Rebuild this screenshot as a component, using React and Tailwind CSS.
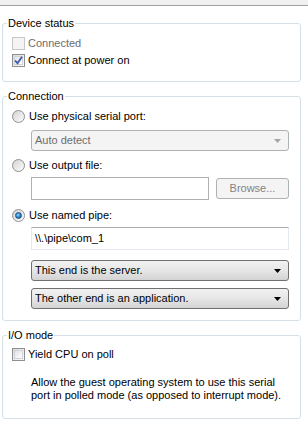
import React from 'react'

const font = "font-['Liberation_Sans',Arial,sans-serif]"

function Group({ title, className, children }) {
  return (
    <fieldset className={'ml-[2px] mr-[7px] p-0 border border-[#d5dfe5] rounded-[3px] ' + className}>
      <legend className="ml-[4px] px-[1px] h-[13px] leading-[13px]">{title}</legend>
      {children}
    </fieldset>
  )
}

function Check({ checked, disabled, label }) {
  return (
    <div className="h-[17px] flex items-center">
      <div
        className={
          'w-[13px] h-[13px] border flex items-center justify-center ' +
          (disabled
            ? 'border-[#c7c7c7] bg-[#f4f4f4]'
            : 'border-[#8f8f8f] bg-gradient-to-br from-[#dcdcdc] to-[#fbfbfb]')
        }
      >
        {!disabled && (
          <div className="w-[9px] h-[9px] border border-[#cfd2d8] bg-gradient-to-br from-[#e3e3e3] to-[#fefefe] flex items-center justify-center">
            {checked && (
              <svg width="9" height="9" viewBox="0 0 9 9" className="overflow-visible">
                <path d="M1 4.5 L3.5 7.2 L8 0.8" fill="none" stroke="#3d58a8" strokeWidth="1.8" />
              </svg>
            )}
          </div>
        )}
      </div>
      <span className={'ml-[3px] ' + (disabled ? 'text-[#6d6d6d]' : '')}>{label}</span>
    </div>
  )
}

function Radio({ checked, label }) {
  return (
    <div className="h-[17px] flex items-center">
      <div className="w-[13px] h-[13px] rounded-full border border-[#8f8f8f] bg-gradient-to-br from-[#d4d4d4] to-[#fcfcfc] flex items-center justify-center">
        {checked && (
          <div className="w-[7px] h-[7px] rounded-full bg-[radial-gradient(circle_at_40%_40%,#9fd8f6_0%,#2f8fd0_45%,#0b3f7a_100%)] border border-[#1f4f8a]" />
        )}
      </div>
      <span className="ml-[4px]">{label}</span>
    </div>
  )
}

function Arrow({ color }) {
  return (
    <svg width="7" height="4" viewBox="0 0 7 4">
      <path d="M0 0 H7 L3.5 4 Z" fill={color} />
    </svg>
  )
}

function Combo({ text, disabled, className }) {
  return (
    <div
      className={
        'h-[21px] w-[258px] rounded-[3px] border flex items-center pl-[3px] pr-[7px] ' +
        (disabled
          ? 'border-[#adb2b5] bg-[#f4f4f4] text-[#6d6d6d] '
          : 'border-[#707070] bg-gradient-to-b from-[#f2f2f2] via-[#e6e6e6] to-[#d3d3d3] ') +
        className
      }
    >
      <span className="flex-1">{text}</span>
      <Arrow color={disabled ? '#a6a6a6' : '#000'} />
    </div>
  )
}

export default function App() {
  return (
    <div className={'w-[308px] h-[424px] bg-white text-black text-[11px] leading-[13px] overflow-hidden ' + font}>
      <div className="h-[6px] bg-[#f0f0f0] border-b border-[#a0a0a0]" />

      <Group title="Device status" className="mt-[11px]">
        <div className="pl-[9px] pt-[5px] pb-[12px]">
          <Check disabled label="Connected" />
          <Check checked label="Connect at power on" />
        </div>
      </Group>

      <Group title="Connection" className="mt-[8px]">
        <div className="pl-[9px] pt-[5px] pb-[11px]">
          <Radio label="Use physical serial port:" />
          <Combo disabled text="Auto detect" className="ml-[19px] mt-[5px]" />
          <div className="mt-[6px]">
            <Radio label="Use output file:" />
          </div>
          <div className="ml-[19px] mt-[3px] flex items-center gap-[7px]">
            <div className="w-[178px] h-[23px] border border-[#afafaf] bg-white" />
            <div className="w-[73px] h-[21px] rounded-[3px] border border-[#adb2b5] bg-[#f4f4f4] text-[#838383] flex items-center justify-center">
              Browse...
            </div>
          </div>
          <div className="mt-[7px]">
            <Radio checked label="Use named pipe:" />
          </div>
          <div className="ml-[19px] mt-[3px] w-[258px] h-[23px] border border-[#e3e9ef] border-t-[#abadb3] bg-white flex items-center pl-[3px]">
            \\.\pipe\com_1
          </div>
          <Combo text="This end is the server." className="ml-[19px] mt-[10px]" />
          <Combo text="The other end is an application." className="ml-[19px] mt-[7px]" />
        </div>
      </Group>

      <Group title="I/O mode" className="mt-[8px]">
        <div className="pl-[9px] pt-[4px] pb-[16px]">
          <Check label="Yield CPU on poll" />
          <p className="ml-[19px] mt-[13px] leading-[13px]">
            Allow the guest operating system to use this serial
            <br />
            port in polled mode (as opposed to interrupt mode).
          </p>
        </div>
      </Group>
    </div>
  )
}
